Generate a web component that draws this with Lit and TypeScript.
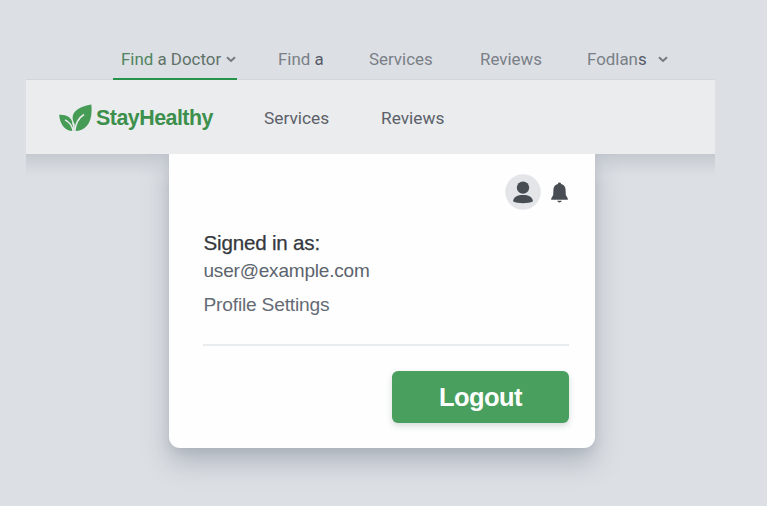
import { LitElement, html, css } from "lit";
import { customElement, property } from "lit/decorators.js";

const chevron = html`<svg class="chevron" viewBox="0 0 10 7" width="10" height="7">
  <path d="M1 1.2 5 5 9 1.2" fill="none" stroke="currentColor" stroke-width="1.900" />
</svg>`;

@customElement("account-menu")
export class AccountMenu extends LitElement {
  @property() email = "user@example.com";

  static styles = css`
    :host {
      display: flex;
      flex-direction: column;
      box-sizing: border-box;
      width: 426px;
      height: 294px;
      padding: 20px 26px 26px 34px;
      background: #fefefe;
      border-radius: 0 0 11px 11px;
      box-shadow: 0 14px 26px rgba(100, 112, 125, 0.36), 0 3px 8px rgba(100, 112, 125, 0.12);
      font-family: "Liberation Sans", Arial, sans-serif;
    }
    .icons {
      display: flex;
      justify-content: flex-end;
      align-items: center;
      gap: 10px;
      height: 36px;
    }
    .avatar {
      display: block;
    }
    .bell {
      display: block;
      margin-right: 1px;
    }
    .title,
    .email,
    .link {
      white-space: nowrap;
      align-self: flex-start;
      padding-left: 0.5px;
    }
    .title {
      margin-top: 19px;
      font-size: 20.6px;
      letter-spacing: -0.2px;
      line-height: 28px;
      color: #34383d;
      -webkit-text-stroke: 0.25px #34383d;
    }
    .email {
      font-size: 19px;
      letter-spacing: -0.2px;
      line-height: 26px;
      margin-top: 1px;
      color: #5b636d;
    }
    .link {
      margin-top: 8px;
      font-size: 19.2px;
      letter-spacing: -0.2px;
      line-height: 26px;
      color: #646b75;
    }
    .rule {
      height: 2px;
      margin-top: 26px;
      background: #e8ecef;
      flex: none;
    }
    .logout {
      align-self: flex-end;
      margin: 25px 0 0;
      width: 177px;
      height: 52px;
      flex: none;
      border: 0;
      border-radius: 6px;
      padding: 0;
      background: #499f5e;
      box-shadow: 0 3px 6px rgba(60, 80, 70, 0.2);
      color: #fdfefd;
      font: 700 25.5px/52px "Liberation Sans", Arial, sans-serif;
      letter-spacing: -0.6px;
    }
  `;

  render() {
    return html`
      <div class="icons">
        <svg class="avatar" width="36" height="36" viewBox="0 0 36 36">
          <circle cx="18" cy="18" r="17.800" fill="#e3e5e9" />
          <circle cx="18" cy="13.600" r="6.2" fill="#484d54" />
          <path d="M8 27.300c.5-4.500 4.500-6.300 10-6.300s9.500 1.800 10 6.300c-2.500 1.400-6 1.900-10 1.900s-7.500-.5-10-1.900z" fill="#484d54" />
        </svg>
        <svg class="bell" width="17" height="21" viewBox="0 0 17 21">
          <path d="M8.500.5c.9 0 1.500.6 1.600 1.400 2.900.8 4.400 2.800 4.500 5.800l.2 5.300 2 3.500v1.300H.2v-1.300l2-3.500.2-5.300c.1-3 1.600-5 4.500-5.800C7 1.100 7.600.5 8.500.5zM6.300 18.800h4.400c-.3 1.200-1.100 1.700-2.200 1.700s-1.900-.5-2.200-1.700z" fill="#484d54" />
        </svg>
      </div>
      <div class="title">Signed in as:</div>
      <div class="email">${this.email}</div>
      <div class="link">Profile Settings</div>
      <div class="rule"></div>
      <button class="logout">Logout</button>
    `;
  }
}

@customElement("app-root")
export class AppRoot extends LitElement {
  static styles = css`
    :host {
      display: block;
      box-sizing: border-box;
      width: 767px;
      height: 506px;
      padding: 39px 52px 0 26px;
      overflow: hidden;
      background: #dcdfe4;
      font-family: Roboto, "Liberation Sans", sans-serif;
    }
    .tabs {
      display: flex;
      box-sizing: border-box;
      height: 41px;
      padding-left: 87px;
      border-bottom: 1px solid #d3d7dc;
      font-size: 16.9px;
      line-height: 40px;
      color: #7a7f87;
      white-space: nowrap;
    }
    .tab {
      box-sizing: border-box;
      height: 41px;
      flex: none;
    }
    .active {
      display: flex;
      align-items: center;
      position: relative;
      z-index: 1;
      width: 124px;
      padding-left: 8px;
      margin-right: 41px;
      border-bottom: 2px solid #279249;
      color: #5f7268;
    }
    .lead {
      color: #4f8560;
    }
    .strong {
      color: #555b68;
    }
    .second {
      width: 91px;
    }
    .third {
      width: 111px;
    }
    .fourth {
      width: 107px;
    }
    .fifth {
      display: flex;
      align-items: center;
      height: 40px;
    }
    .chevron {
      flex: none;
      margin-left: 5px;
      color: #747980;
    }
    .active .chevron {
      margin-top: 2px;
    }
    .fifth .chevron {
      margin-left: 11px;
    }
    .bar {
      display: flex;
      align-items: center;
      box-sizing: border-box;
      height: 74px;
      padding: 2px 0 0 33px;
      background: #eaecee;
      color: #5c6068;
      font-size: 17.3px;
      white-space: nowrap;
    }
    .logo {
      flex: none;
      margin-right: 4px;
    }
    .brand {
      width: 168px;
      flex: none;
      font-family: "Liberation Sans", Arial, sans-serif;
      font-size: 21.4px;
      letter-spacing: -0.5px;
      font-weight: 700;
      color: #3d8f4c;
    }
    .services {
      width: 117px;
      flex: none;
    }
    .below {
      height: 352px;
      margin: 0 -52px 0 -26px;
      padding-left: 169px;
      overflow: hidden;
    }
    .shade {
      height: 22px;
      margin: 0 52px -22px -143px;
      background: linear-gradient(rgba(120, 132, 145, 0.24), rgba(120, 132, 145, 0.1) 50%, rgba(120, 132, 145, 0));
    }
    account-menu {
      position: relative;
    }
  `;

  render() {
    return html`
      <nav class="tabs">
        <div class="tab active"><span><span class="lead">Find</span> a Doctor</span>${chevron}</div>
        <div class="tab second">Find <span class="strong">a</span></div>
        <div class="tab third">Services</div>
        <div class="tab fourth">Reviews</div>
        <div class="tab fifth"><span>Fodlan<span class="strong">s</span></span>${chevron}</div>
      </nav>
      <header class="bar">
        <svg class="logo" width="33" height="28" viewBox="0 0 33 28">
          <path d="M32.300.4C22 1.800 13.800 6.500 13.600 13.500c0 2.200.6 4 1.700 6L16 27c9.500.3 18.500-7.500 16.300-26.600z" fill="#469c55" />
          <path d="M.2 10.800c6.300-.6 12.300 2 13.300 8.400L14.500 27C6 27.500.7 20 .2 10.800z" fill="#469c55" />
          <path d="M25 10.500C20 13.500 16.500 19 15.600 27.800M6 15.800c4.500 2.200 7.500 6 8.300 12M13.800 18.500l1.300 3.500" fill="none" stroke="#eaecee" stroke-width="1.500" />
        </svg>
        <div class="brand">StayHealthy</div>
        <div class="services">Services</div>
        <div>Reviews</div>
      </header>
      <div class="below">
        <div class="shade"></div>
        <account-menu></account-menu>
      </div>
    `;
  }
}
